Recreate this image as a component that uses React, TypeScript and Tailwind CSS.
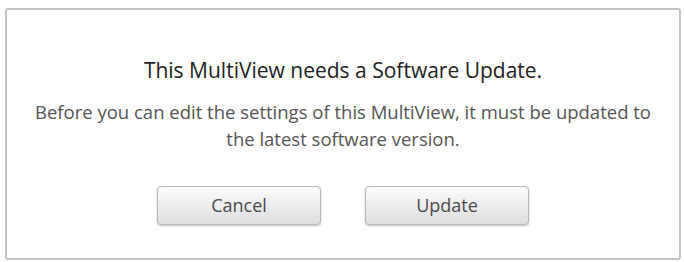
import React from 'react';

const font = { fontFamily: '"Open Sans", "Noto Sans", sans-serif' };

const DialogButton: React.FC<{ label: string }> = ({ label }) => (
  <button className="w-[164px] h-[39px] rounded-[4px] border border-[#b9b9b9] bg-gradient-to-b from-[#fbfbfb] to-[#dedede] text-[18px] text-[#4a4a4a] shadow-[0_1px_2px_rgba(0,0,0,0.25)]">
    {label}
  </button>
);

const App: React.FC = () => {
  return (
    <div className="w-[684px] h-[262px] bg-white pt-[8px] pl-[5px]" style={font}>
      <div className="w-[676px] h-[252px] rounded-[3px] border-2 border-[#c4c4c4] bg-white flex flex-col items-center">
        <h1 className="mt-[47px] text-[21px] text-[#222] leading-[26px]">
          This MultiView needs a Software Update.
        </h1>
        <p className="mt-[15px] text-[18.5px] leading-[27px] text-[#555] text-center whitespace-nowrap">
          Before you can edit the settings of this MultiView, it must be updated to
          <br />
          the latest software version.
        </p>
        <div className="mt-[34px] flex gap-[44px]">
          <DialogButton label="Cancel" />
          <DialogButton label="Update" />
        </div>
      </div>
    </div>
  );
};

export default App;
